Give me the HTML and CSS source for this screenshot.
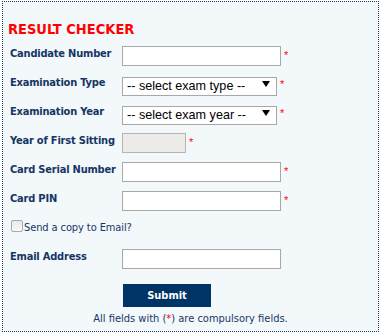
FILE: index.html
```html
<!DOCTYPE html>
<html>
<head>
<meta charset="utf-8">
<link rel="stylesheet" href="styles.css">
</head>
<body>
<div class="frame">
  <h1 class="title">RESULT CHECKER</h1>
  <form class="form">
    <div class="row">
      <label class="lbl">Candidate Number</label>
      <input class="txt" type="text">
      <span class="req">*</span>
    </div>
    <div class="row">
      <label class="lbl">Examination Type</label>
      <span class="selwrap">
        <select class="sel"><option>-- select exam type --</option></select>
        <svg class="arrow" width="8" height="6" viewBox="0 0 8 6"><path d="M0 0H8L4 6Z" fill="#000"/></svg>
      </span>
      <span class="req">*</span>
    </div>
    <div class="row">
      <label class="lbl">Examination Year</label>
      <span class="selwrap">
        <select class="sel"><option>-- select exam year --</option></select>
        <svg class="arrow" width="8" height="6" viewBox="0 0 8 6"><path d="M0 0H8L4 6Z" fill="#000"/></svg>
      </span>
      <span class="req">*</span>
    </div>
    <div class="row">
      <label class="lbl">Year of First Sitting</label>
      <input class="txt short" type="text" disabled>
      <span class="req">*</span>
    </div>
    <div class="row">
      <label class="lbl">Card Serial Number</label>
      <input class="txt" type="text">
      <span class="req">*</span>
    </div>
    <div class="row">
      <label class="lbl">Card PIN</label>
      <input class="txt" type="text">
      <span class="req">*</span>
    </div>
    <div class="row check">
      <input class="cb" type="checkbox"><span class="cbtext">Send a copy to Email?</span>
    </div>
    <div class="row">
      <label class="lbl">Email Address</label>
      <input class="txt" type="text">
    </div>
    <div class="actions">
      <button class="btn" type="button">Submit</button>
    </div>
    <p class="note">All fields with (<span class="red">*</span>) are compulsory fields.</p>
  </form>
</div>
</body>
</html>
```

FILE: styles.css
```css
html, body {
  margin: 0;
  padding: 0;
  background: #ffffff;
}
.frame {
  box-sizing: border-box;
  margin: 1px 0 0 2px;
  width: 377px;
  height: 331px;
  border: 1px dotted #1d3c6a;
  background: #f3f8fb;
  font-family: "DejaVu Sans Condensed", "DejaVu Sans", sans-serif;
  color: #163663;
}
.title {
  margin: 0;
  padding: 18px 0 0 5px;
  height: 22px;
  font-size: 14.5px;
  line-height: 18px;
  font-weight: bold;
  color: #ff0000;
}
.form {
  margin: 0;
  padding: 0 0 0 7px;
}
.row {
  display: flex;
  align-items: flex-start;
  height: 29px;
}
.lbl {
  width: 112px;
  flex: none;
  padding-top: 4px;
  font-size: 11px;
  line-height: 15px;
  letter-spacing: -0.2px;
  font-weight: bold;
  white-space: nowrap;
  color: #163663;
}
.txt {
  box-sizing: border-box;
  margin: 4px 0 0 0;
  width: 159px;
  height: 20px;
  border: 1px solid #a8a8a8;
  background: #ffffff;
  padding: 0 3px;
  flex: none;
}
.txt.short {
  width: 64px;
  background: #ecebe7;
  border-color: #b5b5b5;
}
.selwrap {
  position: relative;
  margin-top: 4px;
  flex: none;
  width: 155px;
  height: 19px;
}
.sel {
  -webkit-appearance: none;
  appearance: none;
  box-sizing: border-box;
  width: 155px;
  height: 19px;
  margin: 0;
  border: 1px solid #a8a8a8;
  border-radius: 0;
  background: #ffffff;
  padding: 0 0 0 4px;
  font-family: "Liberation Sans", Arial, sans-serif;
  font-size: 12.6px;
  line-height: 17px;
  color: #000000;
}
.arrow {
  position: absolute;
  right: 7px;
  top: 6px;
  pointer-events: none;
}
.req {
  margin: 7px 0 0 3px;
  font-family: "Liberation Sans", Arial, sans-serif;
  font-size: 11px;
  line-height: 12px;
  color: #ff0000;
}
.cb {
  -webkit-appearance: none;
  appearance: none;
  box-sizing: border-box;
  margin: 4px 1px 0 1px;
  width: 12px;
  height: 12px;
  border: 1px solid #a9a9a9;
  border-radius: 2px;
  background: linear-gradient(#e9e9e9, #f9f9f9);
  flex: none;
}
.cbtext {
  padding-top: 5px;
  font-size: 11px;
  line-height: 13px;
  letter-spacing: -0.1px;
  white-space: nowrap;
  color: #163663;
}
.actions {
  display: flex;
  padding: 10px 0 0 113px;
}
.btn {
  box-sizing: border-box;
  width: 88px;
  height: 23px;
  margin: 0;
  border: none;
  background: #003366;
  color: #ffffff;
  font-family: "DejaVu Sans Condensed", "DejaVu Sans", sans-serif;
  font-size: 11px;
  font-weight: bold;
  padding: 0;
}
.note {
  margin: 4px 0 0 -7px;
  text-align: center;
  font-size: 11px;
  line-height: 15px;
  color: #163663;
}
.red {
  color: #ff0000;
}
```
